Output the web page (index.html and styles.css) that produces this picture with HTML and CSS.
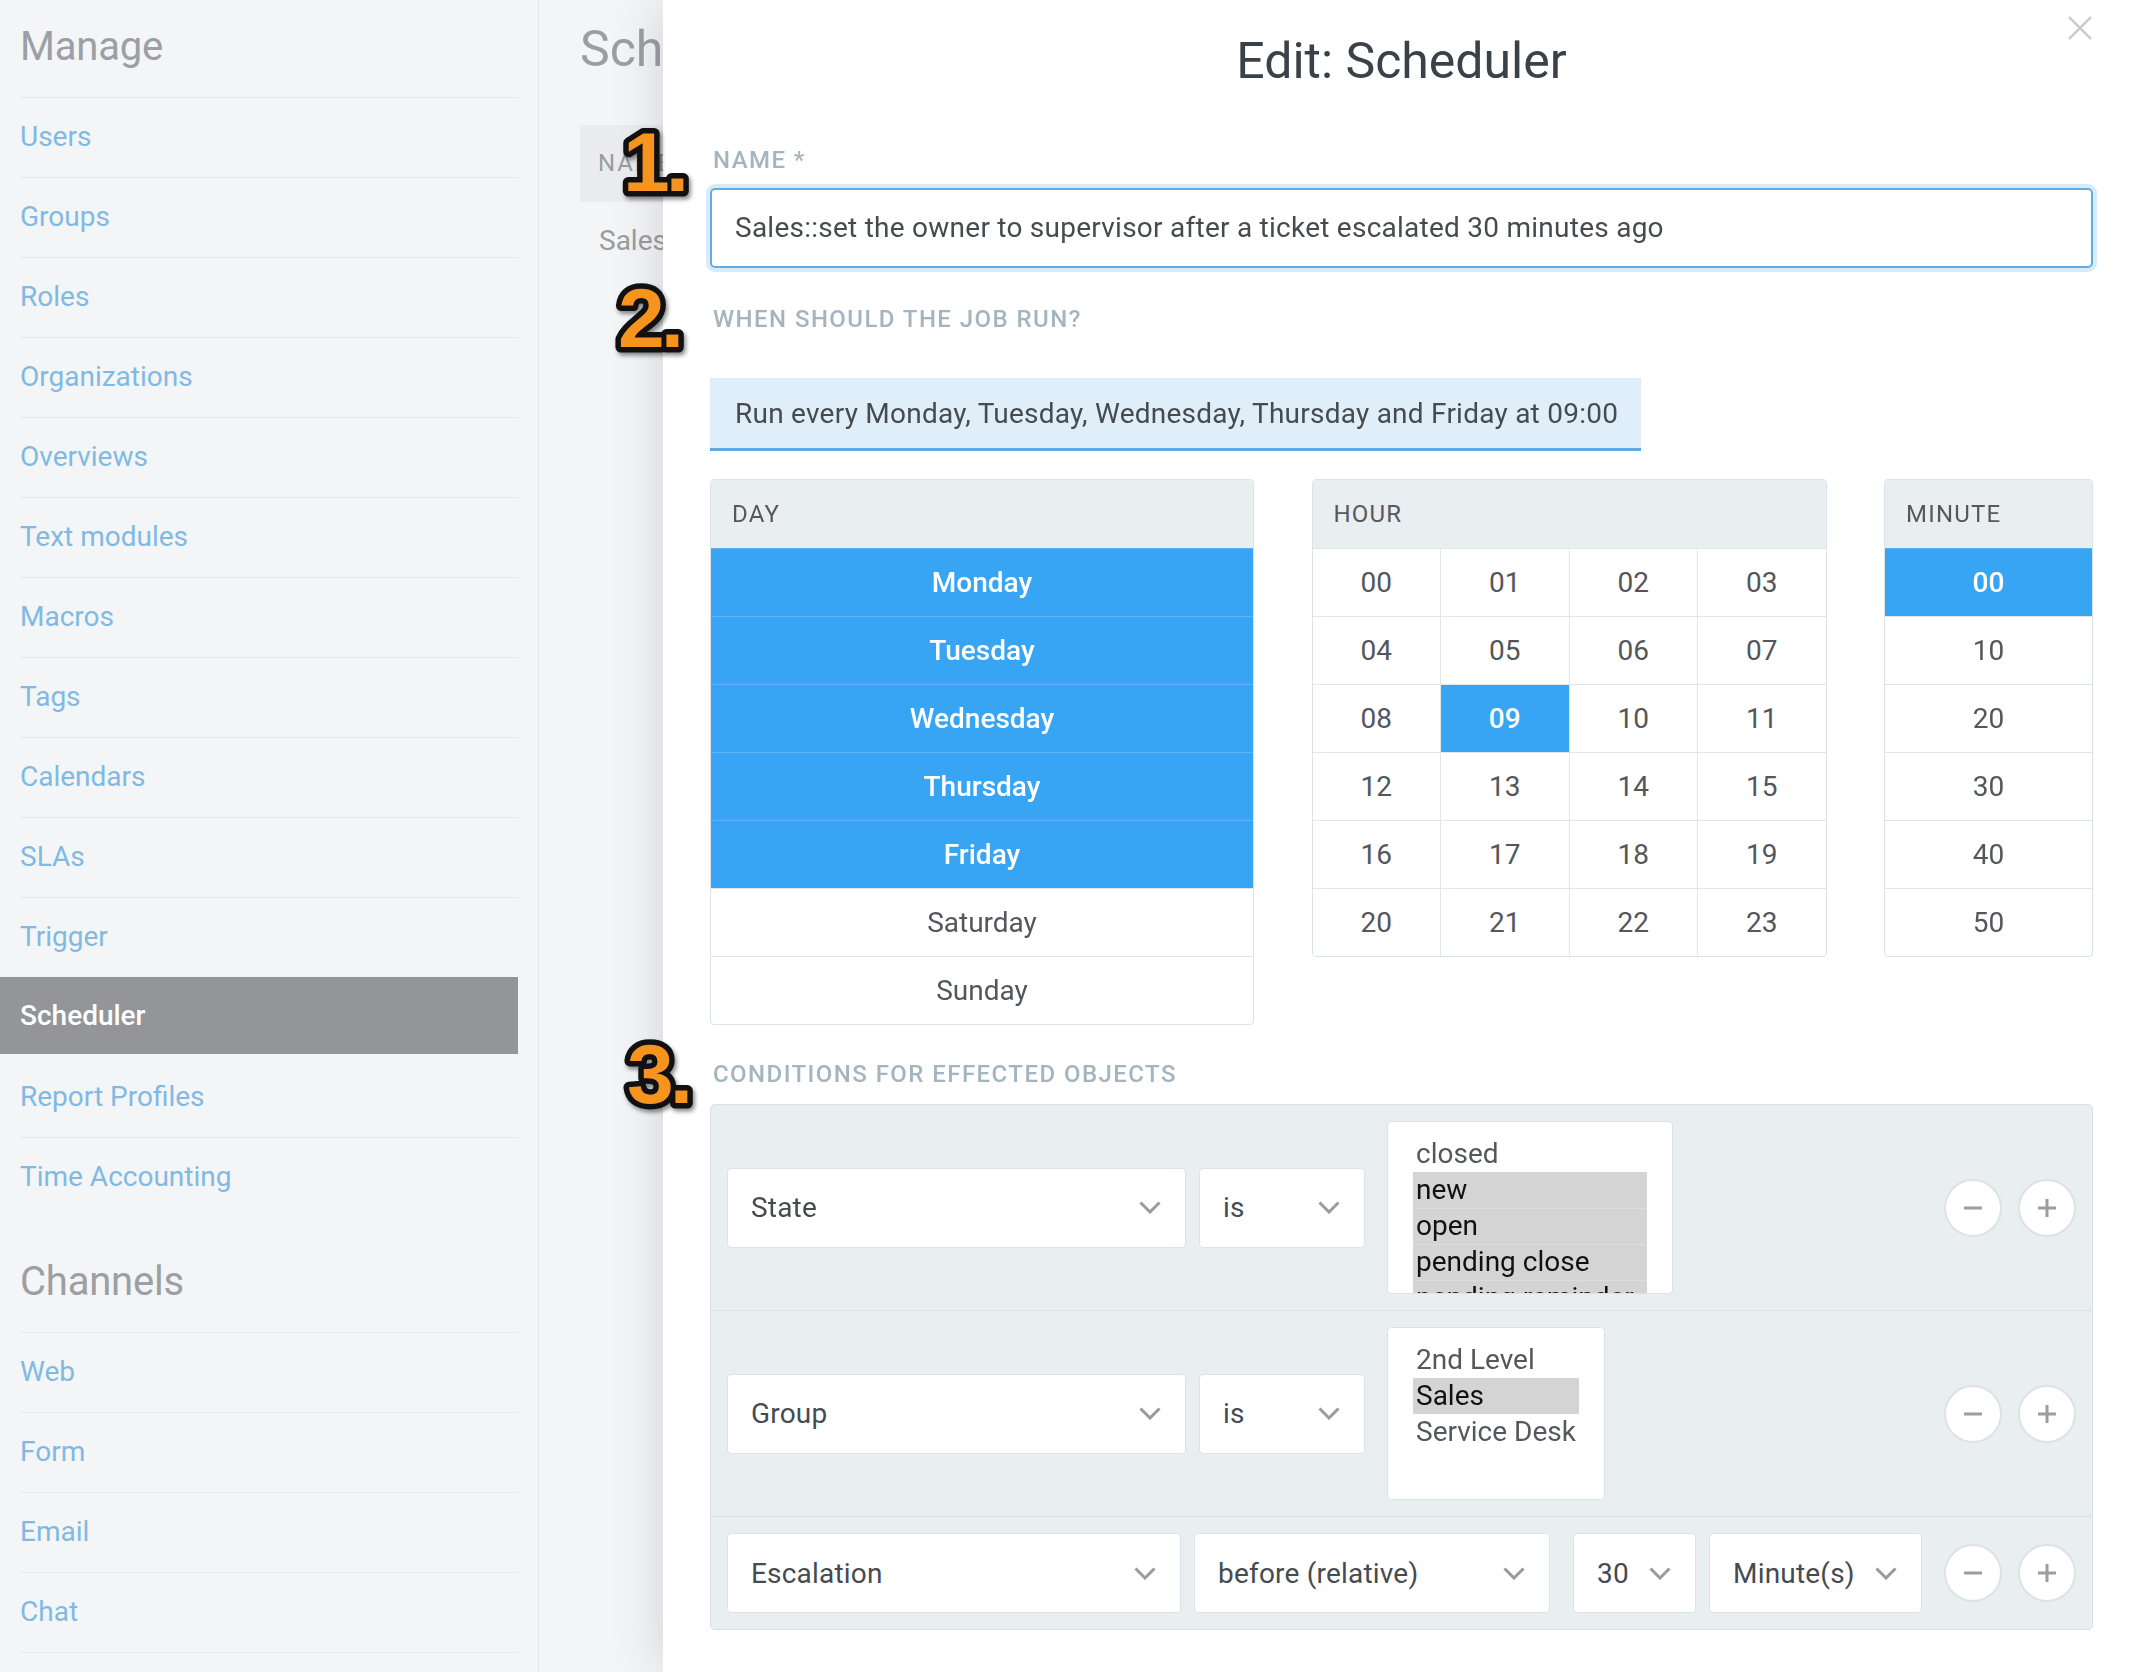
FILE: index.html
```html
<!DOCTYPE html>
<html lang="en">
<head>
<meta charset="utf-8">
<title>Edit: Scheduler</title>
<link rel="stylesheet" href="styles.css">
</head>
<body>
<div class="app">
  <aside class="sidebar">
    <h2 class="nav-heading">Manage</h2>
    <ul class="nav">
      <li><a>Users</a></li>
      <li><a>Groups</a></li>
      <li><a>Roles</a></li>
      <li><a>Organizations</a></li>
      <li><a>Overviews</a></li>
      <li><a>Text modules</a></li>
      <li><a>Macros</a></li>
      <li><a>Tags</a></li>
      <li><a>Calendars</a></li>
      <li><a>SLAs</a></li>
      <li><a>Trigger</a></li>
      <li class="active"><a>Scheduler</a></li>
      <li><a>Report Profiles</a></li>
      <li><a>Time Accounting</a></li>
    </ul>
    <h2 class="nav-heading nav-heading--channels">Channels</h2>
    <ul class="nav">
      <li><a>Web</a></li>
      <li><a>Form</a></li>
      <li><a>Email</a></li>
      <li><a>Chat</a></li>
      <li><a>Twitter</a></li>
    </ul>
  </aside>
  <main class="page">
    <h1 class="page-title">Scheduler</h1>
    <div class="page-table-head">Name</div>
    <div class="page-table-cell">Sales::set the owner to supervisor after a ticket escalated 30 minutes ago</div>
  </main>
</div>

<section class="modal">
  <button class="modal-close" aria-label="Close">
    <svg width="26" height="26" viewBox="0 0 26 26"><path d="M2 2 L24 24 M24 2 L2 24" stroke="#c6c8cb" stroke-width="2.4" fill="none"/></svg>
  </button>
  <h1 class="modal-title">Edit: Scheduler</h1>

  <div class="label label--name">Name *</div>
  <div class="input">Sales::set the owner to supervisor after a ticket escalated 30 minutes ago</div>

  <div class="label label--when">When should the job run?</div>
  <div class="run-row">
    <div class="run-summary">Run every Monday, Tuesday, Wednesday, Thursday and Friday at 09:00</div>
  </div>

  <div class="pickers">
    <div class="picker">
      <div class="picker-head">Day</div>
      <div class="list">
        <div class="list-cell is-selected">Monday</div>
        <div class="list-cell is-selected">Tuesday</div>
        <div class="list-cell is-selected">Wednesday</div>
        <div class="list-cell is-selected">Thursday</div>
        <div class="list-cell is-selected">Friday</div>
        <div class="list-cell">Saturday</div>
        <div class="list-cell">Sunday</div>
      </div>
    </div>
    <div class="picker">
      <div class="picker-head">Hour</div>
      <div class="hour-grid">
        <div class="grid-cell">00</div><div class="grid-cell">01</div><div class="grid-cell">02</div><div class="grid-cell">03</div>
        <div class="grid-cell">04</div><div class="grid-cell">05</div><div class="grid-cell">06</div><div class="grid-cell">07</div>
        <div class="grid-cell">08</div><div class="grid-cell is-selected">09</div><div class="grid-cell">10</div><div class="grid-cell">11</div>
        <div class="grid-cell">12</div><div class="grid-cell">13</div><div class="grid-cell">14</div><div class="grid-cell">15</div>
        <div class="grid-cell">16</div><div class="grid-cell">17</div><div class="grid-cell">18</div><div class="grid-cell">19</div>
        <div class="grid-cell">20</div><div class="grid-cell">21</div><div class="grid-cell">22</div><div class="grid-cell">23</div>
      </div>
    </div>
    <div class="picker">
      <div class="picker-head">Minute</div>
      <div class="list">
        <div class="list-cell is-selected">00</div>
        <div class="list-cell">10</div>
        <div class="list-cell">20</div>
        <div class="list-cell">30</div>
        <div class="list-cell">40</div>
        <div class="list-cell">50</div>
      </div>
    </div>
  </div>

  <div class="label label--cond">Conditions for effected objects</div>
  <div class="conditions">
    <div class="cond-row">
      <div class="select select--attr">State<svg class="chev" width="22" height="13" viewBox="0 0 22 13"><polyline points="1.5,1.5 11,11 20.5,1.5" fill="none" stroke="#9b9b9b" stroke-width="3"/></svg></div>
      <div class="select select--op">is<svg class="chev" width="22" height="13" viewBox="0 0 22 13"><polyline points="1.5,1.5 11,11 20.5,1.5" fill="none" stroke="#9b9b9b" stroke-width="3"/></svg></div>
      <div class="listbox listbox--state">
        <div class="opt">closed</div>
        <div class="opt is-selected">new</div>
        <div class="opt is-selected">open</div>
        <div class="opt is-selected">pending close</div>
        <div class="opt is-selected">pending reminder</div>
      </div>
      <div class="row-actions">
        <button class="circle" aria-label="Remove"><svg width="20" height="20" viewBox="0 0 20 20"><path d="M1 10 H19" stroke="#9d9d9d" stroke-width="3"/></svg></button>
        <button class="circle" aria-label="Add"><svg width="20" height="20" viewBox="0 0 20 20"><path d="M1 10 H19 M10 1 V19" stroke="#9d9d9d" stroke-width="3"/></svg></button>
      </div>
    </div>
    <div class="cond-row">
      <div class="select select--attr">Group<svg class="chev" width="22" height="13" viewBox="0 0 22 13"><polyline points="1.5,1.5 11,11 20.5,1.5" fill="none" stroke="#9b9b9b" stroke-width="3"/></svg></div>
      <div class="select select--op">is<svg class="chev" width="22" height="13" viewBox="0 0 22 13"><polyline points="1.5,1.5 11,11 20.5,1.5" fill="none" stroke="#9b9b9b" stroke-width="3"/></svg></div>
      <div class="listbox listbox--group">
        <div class="opt">2nd Level</div>
        <div class="opt is-selected">Sales</div>
        <div class="opt">Service Desk</div>
      </div>
      <div class="row-actions">
        <button class="circle" aria-label="Remove"><svg width="20" height="20" viewBox="0 0 20 20"><path d="M1 10 H19" stroke="#9d9d9d" stroke-width="3"/></svg></button>
        <button class="circle" aria-label="Add"><svg width="20" height="20" viewBox="0 0 20 20"><path d="M1 10 H19 M10 1 V19" stroke="#9d9d9d" stroke-width="3"/></svg></button>
      </div>
    </div>
    <div class="cond-row">
      <div class="select select--esc">Escalation<svg class="chev" width="22" height="13" viewBox="0 0 22 13"><polyline points="1.5,1.5 11,11 20.5,1.5" fill="none" stroke="#9b9b9b" stroke-width="3"/></svg></div>
      <div class="select select--before">before (relative)<svg class="chev" width="22" height="13" viewBox="0 0 22 13"><polyline points="1.5,1.5 11,11 20.5,1.5" fill="none" stroke="#9b9b9b" stroke-width="3"/></svg></div>
      <div class="select select--num">30<svg class="chev" width="22" height="13" viewBox="0 0 22 13"><polyline points="1.5,1.5 11,11 20.5,1.5" fill="none" stroke="#9b9b9b" stroke-width="3"/></svg></div>
      <div class="select select--unit">Minute(s)<svg class="chev" width="22" height="13" viewBox="0 0 22 13"><polyline points="1.5,1.5 11,11 20.5,1.5" fill="none" stroke="#9b9b9b" stroke-width="3"/></svg></div>
      <div class="row-actions">
        <button class="circle" aria-label="Remove"><svg width="20" height="20" viewBox="0 0 20 20"><path d="M1 10 H19" stroke="#9d9d9d" stroke-width="3"/></svg></button>
        <button class="circle" aria-label="Add"><svg width="20" height="20" viewBox="0 0 20 20"><path d="M1 10 H19 M10 1 V19" stroke="#9d9d9d" stroke-width="3"/></svg></button>
      </div>
    </div>
  </div>
</section>

<svg class="step step--1" width="96" height="96" viewBox="0 0 96 96"><text x="8" y="76">1.</text></svg>
<svg class="step step--2" width="96" height="96" viewBox="0 0 96 96"><text x="8" y="76">2.</text></svg>
<svg class="step step--3" width="96" height="96" viewBox="0 0 96 96"><text x="8" y="76">3.</text></svg>
</body>
</html>
```

FILE: styles.css
```css
html, body {
  margin: 0;
  padding: 0;
}
body {
  width: 2138px;
  height: 1672px;
  overflow: hidden;
  background: #f4f5f7;
  font-family: Roboto, "Noto Sans", sans-serif;
  color: #464b50;
}

/* ---------- background page ---------- */
.app {
  display: flex;
  height: 100%;
}
.sidebar {
  width: 538px;
  flex: none;
  border-right: 1px solid #e4e6e9;
  background: #f4f5f7;
}
.nav-heading {
  margin: 0;
  height: 97px;
  padding-left: 20px;
  font-size: 40px;
  font-weight: 400;
  letter-spacing: -0.2px;
  line-height: 93px;
  color: #9c9fa3;
}
.nav-heading--channels {
  margin-top: 18px;
}
.nav {
  list-style: none;
  margin: 0;
  padding: 0;
  width: 518px;
}
.nav li {
  position: relative;
  height: 80px;
}
.nav li::before {
  content: "";
  position: absolute;
  left: 20px;
  right: 0;
  top: 0;
  height: 1px;
  background: #e6e8eb;
}
.nav a {
  display: block;
  padding-left: 20px;
  line-height: 80px;
  font-size: 28px;
  color: #80bae3;
}
.nav li.active::before,
.nav li.active + li::before {
  display: none;
}
.nav li.active a {
  height: 77px;
  line-height: 77px;
  background: #939598;
  color: #fff;
  font-weight: 500;
}

.page {
  flex: 1;
  padding-left: 41px;
  background: #f4f5f7;
}
.page-title {
  margin: 0;
  padding-top: 3px;
  font-size: 50px;
  font-weight: 400;
  line-height: 93px;
  color: #9b9ea2;
  white-space: nowrap;
}
.page-table-head {
  margin-top: 29px;
  height: 77px;
  padding-left: 18px;
  background: #eaecef;
  line-height: 77px;
  font-size: 24px;
  text-transform: uppercase;
  letter-spacing: 0.08em;
  color: #9c9c9c;
}
.page-table-cell {
  padding-left: 19px;
  line-height: 78px;
  font-size: 28px;
  color: #9c9c9c;
  white-space: nowrap;
}

/* ---------- modal ---------- */
.modal {
  position: fixed;
  top: 0;
  left: 663px;
  right: 0;
  bottom: 0;
  padding: 30px 45px 0 47px;
  background: #fff;
  box-shadow: 0 0 48px rgba(40, 50, 60, 0.18);
}
.modal-close {
  position: absolute;
  top: 15px;
  right: 45px;
  padding: 0;
  border: 0;
  background: none;
  line-height: 0;
}
.modal-title {
  margin: 0;
  text-align: center;
  font-size: 50px;
  font-weight: 400;
  line-height: 62px;
  color: #3a4148;
}
.label {
  padding-left: 3px;
  font-size: 24px;
  font-weight: 500;
  line-height: 28px;
  text-transform: uppercase;
  letter-spacing: 0.06em;
  color: #a4b5c0;
}
.label--name {
  margin-top: 54px;
}
.input {
  margin-top: 14px;
  height: 80px;
  box-sizing: border-box;
  padding-left: 23px;
  border: 2px solid #63abe3;
  border-radius: 5px;
  box-shadow: 0 0 0 4px #d9ebf8;
  font-size: 28px;
  letter-spacing: 0.25px;
  line-height: 76px;
  color: #464b50;
  white-space: nowrap;
}
.label--when {
  margin-top: 37px;
}
.run-row {
  display: flex;
  margin-top: 45px;
}
.run-summary {
  height: 70px;
  padding: 0 23px 0 25px;
  background: #e0eef9;
  border-bottom: 3px solid #5ea9e2;
  font-size: 28px;
  letter-spacing: 0.24px;
  line-height: 72px;
  color: #464b50;
  white-space: nowrap;
}

/* pickers */
.pickers {
  display: grid;
  grid-template-columns: 544px 515px 209px;
  justify-content: space-between;
  align-items: start;
  margin-top: 28px;
}
.picker {
  border: 1px solid #dce2e6;
  border-radius: 4px;
  overflow: hidden;
  background: #fff;
}
.picker-head {
  height: 68px;
  padding-left: 21px;
  background: #e9eef1;
  font-size: 24px;
  line-height: 68px;
  text-transform: uppercase;
  letter-spacing: 0.05em;
  color: #55595e;
}
.list-cell {
  height: 67px;
  border-top: 1px solid #e1e6e9;
  text-align: center;
  font-size: 28px;
  line-height: 67px;
  color: #53575c;
}
.list-cell.is-selected {
  background: #38a5f4;
  border-top-color: #5cb4f5;
  color: #fff;
  font-weight: 500;
}
.hour-grid {
  display: grid;
  grid-template-columns: repeat(4, 1fr);
  gap: 1px;
  border-top: 1px solid #e1e6e9;
  background: #e1e6e9;
}
.grid-cell {
  height: 67px;
  background: #fff;
  text-align: center;
  font-size: 28px;
  line-height: 67px;
  color: #53575c;
}
.grid-cell.is-selected {
  background: #38a5f4;
  color: #fff;
  font-weight: 500;
}

/* conditions */
.label--cond {
  margin-top: 35px;
}
.conditions {
  margin-top: 16px;
  border: 1px solid #d9e0e4;
  border-radius: 5px;
  background: #e9eef1;
}
.cond-row {
  display: flex;
  align-items: center;
  gap: 13px;
  padding: 16px;
}
.cond-row + .cond-row {
  border-top: 1px solid #d9e0e4;
}
.select {
  flex: none;
  display: flex;
  align-items: center;
  justify-content: space-between;
  height: 80px;
  box-sizing: border-box;
  padding: 0 24px 0 23px;
  border: 1px solid #dde2e6;
  border-radius: 4px;
  background: #fff;
  font-size: 28px;
  letter-spacing: 0.2px;
  color: #464b50;
  white-space: nowrap;
}
.chev {
  flex: none;
}
.select--attr { width: 459px; }
.select--op { width: 166px; }
.select--esc { width: 454px; }
.select--before { width: 356px; }
.select--num { width: 123px; margin-left: 10px; }
.select--unit { width: 213px; }

.listbox {
  flex: none;
  height: 173px;
  box-sizing: border-box;
  margin-left: 9px;
  padding: 14px 25px 0;
  border: 1px solid #dde2e6;
  border-radius: 4px;
  background: #fff;
  overflow: hidden;
  font-size: 28px;
  line-height: 36px;
  color: #54585d;
}
.listbox--state { width: 286px; }
.listbox--group { width: 218px; }
.opt {
  padding-left: 3px;
  white-space: nowrap;
}
.opt.is-selected {
  background: #d4d4d4;
  color: #111;
}
.opt.is-selected + .opt.is-selected {
  box-shadow: inset 0 1px 0 #dedede;
}

.row-actions {
  display: flex;
  gap: 16px;
  margin-left: auto;
}
.circle {
  display: flex;
  align-items: center;
  justify-content: center;
  width: 58px;
  height: 58px;
  box-sizing: border-box;
  padding: 0;
  border: 2px solid #dde2e6;
  border-radius: 50%;
  background: #fff;
}

/* step annotations */
.step {
  position: absolute;
  overflow: visible;
  filter: drop-shadow(2px 3px 2px rgba(0, 0, 0, 0.45));
}
.step text {
  font-family: "Liberation Sans", Arial, sans-serif;
  font-weight: 700;
  font-size: 84px;
  letter-spacing: -4px;
  fill: #f7941d;
  stroke: #111;
  stroke-width: 11px;
  stroke-linejoin: round;
  paint-order: stroke fill;
}
.step--1 { left: 615px; top: 115px; }
.step--2 { left: 610px; top: 271px; }
.step--3 { left: 619px; top: 1027px; }
```
